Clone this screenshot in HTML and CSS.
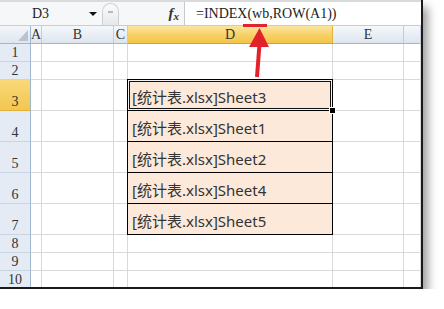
FILE: index.html
```html
<!DOCTYPE html>
<html>
<head>
<meta charset="utf-8">
<link rel="stylesheet" href="styles.css">
</head>
<body>
<div class="window">
  <div class="fbar">
    <div class="namebox"><span class="name">D3</span><span class="drop"></span></div>
    <div class="knob"><span class="dash"></span></div>
    <div class="fx"><span class="f">f</span><span class="x">x</span></div>
    <div class="formula">=INDEX(wb,ROW(A1))</div>
  </div>
  <div class="sheet">
    <div class="corner"><svg width="31" height="18" viewBox="0 0 31 18"><polygon points="28,4 28,15 18,15" fill="#b9c3cf"/></svg></div>
    <div class="ch">A</div><div class="ch">B</div><div class="ch">C</div><div class="ch sel">D</div><div class="ch">E</div><div class="ch"></div>

    <div class="rh">1</div><div class="c"></div><div class="c"></div><div class="c"></div><div class="c"></div><div class="c"></div><div class="c"></div>
    <div class="rh">2</div><div class="c"></div><div class="c"></div><div class="c"></div><div class="c"></div><div class="c"></div><div class="c"></div>
    <div class="rh sel">3</div><div class="c"></div><div class="c"></div><div class="c"></div><div class="c t active">[统计表.xlsx]Sheet3<span class="handle"></span></div><div class="c"></div><div class="c"></div>
    <div class="rh">4</div><div class="c"></div><div class="c"></div><div class="c"></div><div class="c t">[统计表.xlsx]Sheet1</div><div class="c"></div><div class="c"></div>
    <div class="rh">5</div><div class="c"></div><div class="c"></div><div class="c"></div><div class="c t">[统计表.xlsx]Sheet2</div><div class="c"></div><div class="c"></div>
    <div class="rh">6</div><div class="c"></div><div class="c"></div><div class="c"></div><div class="c t">[统计表.xlsx]Sheet4</div><div class="c"></div><div class="c"></div>
    <div class="rh">7</div><div class="c"></div><div class="c"></div><div class="c"></div><div class="c t">[统计表.xlsx]Sheet5</div><div class="c"></div><div class="c"></div>
    <div class="rh">8</div><div class="c"></div><div class="c"></div><div class="c"></div><div class="c"></div><div class="c"></div><div class="c"></div>
    <div class="rh">9</div><div class="c"></div><div class="c"></div><div class="c"></div><div class="c"></div><div class="c"></div><div class="c"></div>
    <div class="rh">10</div><div class="c"></div><div class="c"></div><div class="c"></div><div class="c"></div><div class="c"></div><div class="c"></div>
  </div>
  <svg class="arrow" width="421" height="100" viewBox="0 0 421 100">
    <rect x="243" y="24" width="24" height="3" fill="#e2232b"/>
    <line x1="257" y1="77" x2="259.5" y2="44" stroke="#e2232b" stroke-width="4"/>
    <polygon points="259.5,28 249,47 269,47" fill="#e2232b"/>
  </svg>
</div>
</body>
</html>
```

FILE: styles.css
```css
html, body {
  margin: 0;
  padding: 0;
  background: #ffffff;
}
.window {
  position: relative;
  width: 421px;
  height: 287px;
  border-right: 2px solid #1a1a1a;
  border-bottom: 2px solid #1a1a1a;
  box-shadow: 5px 7px 9px rgba(0, 0, 0, 0.38);
  overflow: hidden;
  background: #ffffff;
}
.fbar {
  height: 26px;
  box-sizing: border-box;
  display: flex;
  align-items: stretch;
  background: #f6f7f8;
  border-top: 2px solid #d9dadc;
  border-bottom: 1px solid #c9cdd3;
}
.namebox {
  width: 100px;
  display: flex;
  align-items: center;
}
.name {
  font-family: "Liberation Serif", serif;
  font-size: 14px;
  color: #222;
  margin-left: 32px;
}
.drop {
  margin-left: 40px;
  width: 0;
  height: 0;
  border-left: 4px solid transparent;
  border-right: 4px solid transparent;
  border-top: 4px solid #111;
}
.knob {
  width: 15px;
  margin: 1px 0 0 2px;
  border: 1px solid #cdd0d5;
  border-bottom: none;
  border-radius: 9px 9px 0 0;
  background: linear-gradient(#fbfbfb, #e6e8ea);
  display: flex;
  justify-content: center;
}
.dash {
  width: 5px;
  height: 2px;
  margin-top: 7px;
  background: #b5b8bc;
}
.fx {
  width: 60px;
  display: flex;
  align-items: center;
  justify-content: flex-end;
  padding-right: 5px;
  font-family: "Liberation Serif", serif;
  font-style: italic;
  font-weight: bold;
  color: #333;
}
.fx .f { font-size: 15px; }
.fx .x { font-size: 11px; margin-top: 4px; }
.formula {
  flex: 1;
  background: #ffffff;
  border-left: 1px solid #c6c9ce;
  padding-left: 11px;
  display: flex;
  align-items: center;
  font-family: "Liberation Serif", serif;
  font-size: 14px;
  color: #222;
}
.sheet {
  display: grid;
  grid-template-columns: 31px 11px 72px 14px 205px 71px 17px;
  grid-template-rows: 18px 18px 18px repeat(5, 31px) 18px 18px 18px;
}
.sheet > div {
  box-sizing: border-box;
}
.corner {
  background: linear-gradient(#f3f6fa, #dfe6ef);
  border-right: 1px solid #9eb6ce;
  border-bottom: 1px solid #9eb6ce;
  line-height: 0;
}
.ch {
  background: linear-gradient(#f5f8fb, #dde5ee);
  border-right: 1px solid #c3ccd8;
  border-bottom: 1px solid #9eb6ce;
  display: flex;
  align-items: center;
  justify-content: center;
  font-family: "Liberation Serif", serif;
  font-size: 14px;
  color: #333;
}
.ch.sel {
  background: linear-gradient(#fbe5a0, #f7d064 55%, #f4c44c);
  border-right-color: #e2b13e;
  border-bottom-color: #c6a04a;
}
.rh {
  background: #e4ebf4;
  border-right: 1px solid #9eb6ce;
  border-bottom: 1px solid #c9d5e3;
  display: flex;
  align-items: flex-end;
  justify-content: center;
  font-family: "Liberation Serif", serif;
  font-size: 14px;
  line-height: 15px;
  color: #333;
  padding-bottom: 1px;
}
.rh.sel {
  background: linear-gradient(#f8d97a, #f3c64e);
  border-bottom-color: #e2b13e;
}
.c {
  border-right: 1px solid #d9d9d9;
  border-bottom: 1px solid #d9d9d9;
}
.c.t {
  margin: -1px 0 0 -1px;
  border: 1px solid #000;
  background: #fde9d9;
  display: flex;
  align-items: center;
  padding: 2px 0 0 4px;
  font-family: "Noto Sans", "Noto Sans CJK SC", sans-serif;
  font-size: 15px;
  color: #333;
  white-space: nowrap;
}
.c.active {
  position: relative;
  box-shadow: inset 0 0 0 1px #f4f4f4, inset 0 0 0 2px #111;
}
.handle {
  position: absolute;
  right: -4px;
  bottom: -4px;
  width: 5px;
  height: 5px;
  background: #000;
  border: 1px solid #fff;
}
.arrow {
  position: absolute;
  left: 0;
  top: 0;
  pointer-events: none;
}
```
